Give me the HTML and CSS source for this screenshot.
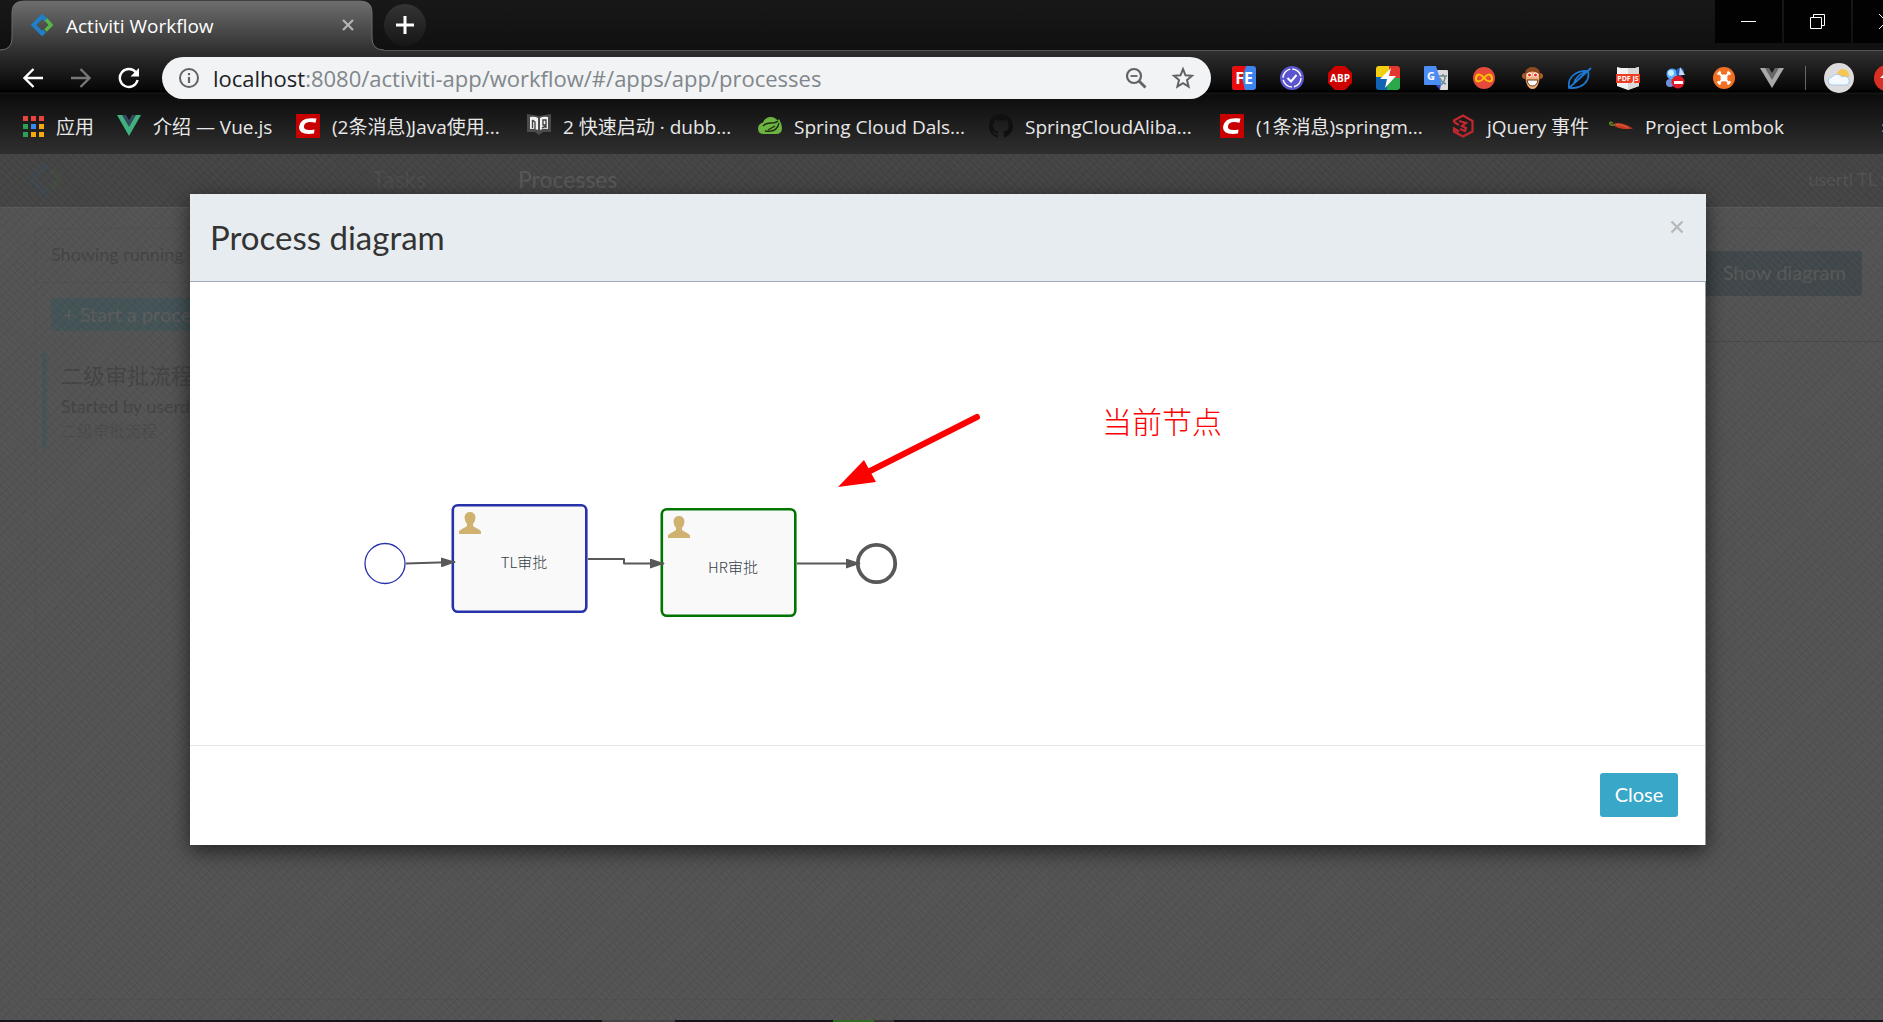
FILE: index.html
```html
<!DOCTYPE html>
<html lang="en">
<head>
<meta charset="utf-8">
<title>Activiti Workflow</title>
<link rel="stylesheet" href="styles.css">
</head>
<body>
<header class="browser">
  <div class="tabstrip">
    <div class="tab">
      <svg class="tab-shape" width="384" height="51" viewBox="0 0 384 51" aria-hidden="true">
        <defs><linearGradient id="tabfill" x1="0" y1="0" x2="0" y2="1"><stop offset="0" stop-color="#6e6e6e"/><stop offset="1" stop-color="#303030"/></linearGradient></defs>
        <path d="M0 51V50Q12 50 12 38V12Q12 1 24 1H360Q372 1 372 12V38Q372 50 384 50V51Z" fill="url(#tabfill)"/>
        <path d="M0 50Q12 50 12 38V12Q12 1 24 1H360Q372 1 372 12V38Q372 50 384 50" fill="none" stroke="#6a6a6a"/>
      </svg>
      <div class="tab-content">
        <svg width="22" height="22" viewBox="0 0 22 22" fill="none" stroke-width="4"><path d="M13.500 4.500L11 2.500 2.500 11l8.500 8.500 2.500-2.500" stroke="#1f7fc8"/><path d="M13 4l2 2" stroke="#1f7fc8"/><path d="M15 5.500L20 11l-5.500 5.500" stroke="#56b648" stroke-width="3.500"/></svg>
        <span class="tab-title">Activiti Workflow</span>
        <button class="plain" aria-label="Close tab"><svg width="12" height="12" viewBox="0 0 12 12" stroke="#b4b4b4" stroke-width="2.200"><path d="M1 1l10 10M11 1L1 11"/></svg></button>
      </div>
    </div>
    <button class="new-tab" aria-label="New tab"><svg width="18" height="18" viewBox="0 0 18 18" stroke="#fff" stroke-width="3"><path d="M9 0v18M0 9h18"/></svg></button>
    <div class="window-controls">
      <button aria-label="Minimize"><svg width="16" height="16" viewBox="0 0 16 16" stroke="#fff"><path d="M0 7.500h15"/></svg></button>
      <button aria-label="Restore"><svg width="16" height="16" viewBox="0 0 16 16" fill="none" stroke="#fff"><path d="M.5 3.500h11v11H.5zM3.500 3.500V.5h11v11h-3"/></svg></button>
      <button aria-label="Close window"><svg width="16" height="16" viewBox="0 0 16 16" stroke="#fff"><path d="M0 0l15 15M15 0L0 15"/></svg></button>
    </div>
  </div>
  <div class="bars">
    <div class="toolbar">
      <nav class="nav-buttons">
        <button class="plain" aria-label="Back"><svg width="22" height="22" viewBox="0 0 22 22" fill="none" stroke="#fff" stroke-width="2.400"><path d="M21 11H3M11.500 2L2.500 11l9 9"/></svg></button>
        <button class="plain" aria-label="Forward"><svg width="22" height="22" viewBox="0 0 22 22" fill="none" stroke="#777" stroke-width="2.400"><path d="M1 11h18M10.500 2l9 9-9 9"/></svg></button>
        <button class="plain" aria-label="Reload"><svg width="22" height="22" viewBox="0 0 22 22" fill="none" stroke="#fff" stroke-width="2.400"><path d="M18 5.500A9 9 0 1 0 19.600 13"/><path d="M21 1v8.500h-8.500z" fill="#fff" stroke="none"/></svg></button>
      </nav>
      <div class="address">
        <svg width="22" height="22" viewBox="0 0 22 22" fill="none" stroke="#5f6368" stroke-width="2"><circle cx="11" cy="11" r="9"/><path d="M11 10v6M11 6v2.200" stroke-width="2.200"/></svg>
        <a class="url" href="#processes"><b>localhost</b>:8080/activiti-app/workflow/#/apps/app/processes</a>
        <button class="plain" aria-label="Zoom"><svg width="22" height="22" viewBox="0 0 22 22" fill="none" stroke="#5f6368" stroke-width="2.200"><circle cx="9" cy="9" r="7"/><path d="M5.500 9h7" stroke-width="1.800"/><path d="M14 14l6.500 6.500" stroke-width="2.800"/></svg></button>
        <button class="plain" aria-label="Bookmark this page"><svg width="24" height="24" viewBox="0 0 24 24" fill="none" stroke="#5f6368" stroke-width="2"><path d="M12 3.200l2.500 6.100 6.500.5-5 4.300 1.600 6.500L12 17.200l-5.600 3.400L8 14.100 3 9.800l6.500-.5z"/></svg></button>
      </div>
      <div class="extensions">
        <svg viewBox="0 0 24 24"><rect width="24" height="24" rx="3" fill="#3d85ee"/><path d="M3 0h11l-4 12 3 12H3a3 3 0 0 1-3-3V3a3 3 0 0 1 3-3z" fill="#e80c0c"/><text x="12" y="18" class="t-fe">FE</text></svg>
        <svg viewBox="0 0 24 24"><circle cx="12" cy="12" r="12" fill="#5b56cd"/><circle cx="12" cy="12" r="9" fill="none" stroke="#fff" stroke-width="1.400" stroke-dasharray="12 2.140"/><path d="M7.500 12l3.500 3.500L16.500 9" fill="none" stroke="#fff" stroke-width="2"/></svg>
        <svg viewBox="0 0 24 24"><path d="M7 0h10l7 7v10l-7 7H7l-7-7V7z" fill="#cf0000"/><text x="12" y="16" class="t-abp">ABP</text></svg>
        <svg viewBox="0 0 24 24"><path d="M3 0h11v12H0V3a3 3 0 0 1 3-3z" fill="#f3cf10"/><path d="M13 0h8a3 3 0 0 1 3 3v10H13z" fill="#e3362f"/><path d="M0 11h12v13H3a3 3 0 0 1-3-3z" fill="#1164b4"/><path d="M11 12h13v9a3 3 0 0 1-3 3H11z" fill="#2ba84a"/><path d="M15 2L4 13h7l-2 9 11-12h-7z" fill="#fff"/></svg>
        <svg viewBox="0 0 24 24"><path d="M11 4h12a1 1 0 0 1 1 1v18a1 1 0 0 1-1 1h-7z" fill="#dcdcdc"/><path d="M11 18h6l-1 6z" fill="#3547c2"/><path d="M1 0h11l6 19H1a1 1 0 0 1-1-1V1a1 1 0 0 1 1-1z" fill="#4c8cf5"/><text x="7" y="14" class="t-g">G</text><path d="M15 10h8M19 8v2M17 19c3-2 4-5 4-9M16 12c1 3 3 5 6 6" fill="none" stroke="#6e8b91" stroke-width="1.500"/></svg>
        <svg viewBox="0 0 24 24"><circle cx="12" cy="12" r="11" fill="#e54a3c"/><path d="M12 12c-3-4-7-5-8 0s5 4 8 0 7-5 8 0-5 4-8 0z" fill="none" stroke="#ffc400" stroke-width="2"/></svg>
        <svg viewBox="0 0 24 24"><circle cx="5" cy="10" r="3" fill="#a55e2c"/><circle cx="20" cy="10" r="3" fill="#a55e2c"/><path d="M12.500 1C6 1 4 6 5 12s3 11 7.500 11S19 18 20 12 19 1 12.500 1z" fill="#8b4a20"/><path d="M6 8q6-5 13 0v7q-2 8-6.500 8T6 15z" fill="#efb078"/><circle cx="9.500" cy="9" r="2.400" fill="#fff"/><circle cx="15.500" cy="9" r="2.400" fill="#fff"/><circle cx="9.500" cy="9" r="1.500" fill="#e22"/><circle cx="15.500" cy="9" r="1.500" fill="#e22"/><path d="M7 14h11q-1 6-5.500 6T7 14z" fill="#fff" stroke="#6b3510"/></svg>
        <svg viewBox="0 0 24 24" fill="none" stroke="#1d78d6" stroke-width="1.700"><path d="M1 22C-1 10 10 4 20 5c2 8-3 18-19 17zM1 22L23 2M6 17C8 10 13 7 20 5"/></svg>
        <svg viewBox="0 0 24 24"><path d="M1 1l4 1h14l4-1v19l-11 4-11-4z" fill="#f2f2f2"/><path d="M12 2h7l4-1v19l-11 4z" fill="#d8d8d8"/><path d="M0 8h24v9H0z" fill="#ee3d23"/><text x="12" y="15" class="t-pdf">PDF JS</text></svg>
        <svg viewBox="0 0 24 24"><circle cx="8" cy="8" r="5.500" fill="#55b1ff"/><circle cx="7" cy="7" r="3" fill="#c8edff"/><circle cx="16" cy="6" r="4" fill="#245fbd"/><path d="M16 1l5 8h-6z" fill="#c7d9f7"/><circle cx="6" cy="17" r="4" fill="#6f8fd6"/><circle cx="14" cy="16" r="6.500" fill="#de1b26"/><path d="M10 15h9v3h-9z" fill="#fff"/></svg>
        <svg viewBox="0 0 24 24"><circle cx="12" cy="12" r="11" fill="#f36f21"/><path d="M7.500 7.500l9 9M16.500 7.500l-9 9" stroke="#fff" stroke-width="2"/><circle cx="12" cy="12" r="3.500" fill="#fff"/><path d="M5.500 8.500l3-3M15.500 5.500l3 3M5.500 15.500l3 3M15.500 18.500l3-3" stroke="#fff" stroke-width="2.200"/></svg>
        <svg viewBox="0 0 24 24"><path d="M0 2h24L12 22z" fill="#a9a9a9"/><path d="M5 2h14l-7 12z" fill="#686868"/><path d="M9 2h6l-3 5z" fill="#181818"/></svg>
      </div>
      <span class="divider"></span>
      <svg class="avatar" width="30" height="30" viewBox="0 0 30 30"><circle cx="15" cy="15" r="15" fill="#dcdcde"/><circle cx="19" cy="12" r="6" fill="#f8c64e"/><path d="M8 22a4 4 0 0 1 0-8 6 6 0 0 1 10 0 4 4 0 0 1 5 8z" fill="#f4f9ff" stroke="#a8c8ec"/></svg>
      <svg class="avatar" width="26" height="26" viewBox="0 0 26 26"><circle cx="13" cy="13" r="13" fill="#d93025"/><path d="M13 6l7 7h-4v6h-6v-6H6z" fill="#fff"/></svg>
    </div>
    <nav class="bookmarks">
      <a class="bm bm-apps" href="#apps"><svg viewBox="0 0 24 24"><path fill="#e8453c" d="M3 2h5v5H3zM11 2h5v5h-5zM19 2h5v5h-5z"/><path fill="#2ba052" d="M3 10h5v5H3zM3 18h5v5H3zM11 18h5v5h-5z"/><path fill="#3a8af5" d="M11 10h5v5h-5z"/><path fill="#f6a90f" d="M19 10h5v5h-5zM19 18h5v5h-5zM11 18h5v5h-5z"/></svg><span>应用</span></a>
      <a class="bm bm-vue" href="#vue"><svg viewBox="0 0 24 24"><path d="M0 1h24L12 22z" fill="#3fb27f"/><path d="M5 1h14l-7 12z" fill="#35495e"/><path d="M9 1h6l-3 5z" fill="#141414"/></svg><span>介绍 — Vue.js</span></a>
      <a class="bm bm-long" href="#java"><svg viewBox="0 0 24 24"><path d="M0 0h24v24H0z" fill="#c80000"/><path d="M20.500 4.500l-1 4.200Q9 6.500 8 12t10.500 3.500l-.5 4Q3 21.500 3 13.500 4 2.500 20.500 4.500z" fill="#fff"/></svg><span>(2条消息)Java使用...</span></a>
      <a class="bm bm-long" href="#dubbo"><svg viewBox="0 0 24 24"><path d="M0 0l12 2 12-2v18h-8l-4 3-4-3H0z" fill="#4b4b4b"/><path d="M3 3q5-1 8 1v12q-4-2-8-1zM21 3q-5-1-8 1v12q4-2 8-1z" fill="#f2f2f2"/><path d="M5.500 6v8M8 15V8L5.500 6M19 14V6h-3v5h3M15 14l4-2" stroke="#444" stroke-width="1.400" fill="none"/></svg><span>2 快速启动 · dubb...</span></a>
      <a class="bm bm-long" href="#spring"><svg viewBox="0 0 24 24"><path d="M6 20Q0 20 0 14.500 0 10 5 8.500 7 3 13 3q4 0 6.500 3.500L21 5q3 5 3 9 0 6-6 6z" fill="#6db33f"/><path d="M5 12q3-3 8-3 5 0 7-2M7 17q12 2 14-8M10 16l7-4" fill="none" stroke="#1b2a12" stroke-width="1.300"/></svg><span>Spring Cloud Dals...</span></a>
      <a class="bm bm-long" href="#alibaba"><svg viewBox="0 0 24 24"><path d="M12 0a12 12 0 0 0-4 23.400c.6.100.8-.3.800-.6v-2c-3.300.7-4-1.600-4-1.600-.6-1.400-1.400-1.800-1.400-1.800 1.200-1 2.300.9 2.800 1.200.8 1.100 2 .8 2.700.6l.8-1.600c-2.700-.3-5.500-1.300-5.500-6 0-1.300.5-2.400 1.200-3.200 0-.9-.4-2 .2-3.200 0 0 1 0 3.300 1.500a11 11 0 0 1 6 0c2.300-1.500 3.300-1.500 3.300-1.500.6 1.200.2 2.300.2 3.200.7.800 1.200 1.900 1.200 3.200 0 4.700-2.800 5.700-5.500 6 .6.500.9 1.200.9 2.200v3c0 .3.200.7.800.6A12 12 0 0 0 12 0z" fill="#101010"/></svg><span>SpringCloudAliba...</span></a>
      <a class="bm bm-long" href="#springm"><svg viewBox="0 0 24 24"><path d="M0 0h24v24H0z" fill="#c80000"/><path d="M20.500 4.500l-1 4.200Q9 6.500 8 12t10.500 3.500l-.5 4Q3 21.500 3 13.500 4 2.500 20.500 4.500z" fill="#fff"/></svg><span>(1条消息)springm...</span></a>
      <a class="bm bm-jquery" href="#jquery"><svg viewBox="0 0 24 24" fill="none" stroke="#c2272d" stroke-width="2.200"><path d="M3 8.500V6.500l9-5 9.500 5.500v10.500L12 22.500l-9-5v-3l5 3"/><path d="M8 7l7 2-4 3 4 2-1 3-5-2M3 8l5 3"/></svg><span>jQuery 事件</span></a>
      <a class="bm" href="#lombok"><svg viewBox="0 0 24 24"><path d="M5 9.500q4-1 8 0t11 5q-7 1-12 0T5 11z" fill="#c23a22"/><path d="M7 10.500q6 0 12 3" stroke="#e2603c" fill="none"/><path d="M1 8q-1 4 5 3M1 8l3 1" stroke="#5a7d22" stroke-width="1.800" fill="none"/></svg><span>Project Lombok</span></a>
      <span class="more">»</span>
    </nav>
  </div>
</header>

<main class="page">
  <div class="app">
    <div class="app-header">
      <svg class="app-logo" width="36" height="36" viewBox="0 0 22 22" fill="none" stroke-width="3"><path d="M13.500 4.500L11 2.500 2.500 11l8.500 8.500 2.500-2.500" stroke="#40474d"/><path d="M15 5.500L20 11l-5.500 5.500" stroke="#434b41"/></svg>
      <a class="app-link" href="#tasks">Tasks</a>
      <a class="app-link app-link-active" href="#processes">Processes</a>
      <a class="app-user" href="#user">usertl TL ▾</a>
    </div>
    <div class="app-body">
      <section class="list">
        <p class="list-summary">Showing running</p>
        <button class="start">+ Start a process</button>
        <article class="item">
          <h3>二级审批流程</h3>
          <p>Started by userda</p>
          <small>二级审批流程</small>
        </article>
      </section>
      <section class="detail">
        <div class="detail-bar"><button class="show">Show diagram</button></div>
      </section>
    </div>
  </div>
  <div class="backdrop"></div>
  <div class="modal" role="dialog" aria-labelledby="modal-title">
    <div class="modal-header">
      <h2 id="modal-title">Process diagram</h2>
      <button class="plain dismiss" aria-label="Dismiss"><svg width="14" height="14" viewBox="0 0 14 14" stroke="#b4b9bc" stroke-width="2.400"><path d="M1.500 1.500l11 11M12.500 1.500l-11 11"/></svg></button>
    </div>
    <svg class="diagram" role="img" aria-label="Process diagram">
      <defs>
        <path id="user" d="M0 22v-2.500q0-1 3-2.500t5-3V12Q5.500 9 5.500 5.500 6 0 11 0t5.500 5.500Q16.500 9 14 12v2q2 1.500 5 3t3 2.500V22z" fill="#d0b270"/>
        <marker id="head" markerUnits="userSpaceOnUse" markerWidth="15" markerHeight="10" refX="14" refY="5" orient="auto"><path d="M0 0l15 5-15 5z" fill="#585858"/></marker>
      </defs>
      <circle cx="195" cy="281.500" r="20" fill="#fff" stroke="#2632aa" stroke-width="1.300"/>
      <rect x="262.800" y="223.300" width="133.500" height="106.500" rx="5" fill="#f9f9f9" stroke="#2632aa" stroke-width="2.600"/>
      <rect x="471.800" y="227.300" width="133.500" height="106.500" rx="5" fill="#f9f9f9" stroke="#017501" stroke-width="2.600"/>
      <circle cx="686.500" cy="281.500" r="18.700" fill="#fff" stroke="#585858" stroke-width="3.800"/>
      <g fill="none" stroke="#585858" stroke-width="2" marker-end="url(#head)">
        <path d="M216 281.500L265 280"/>
        <path d="M398 277H434V281.500H474" stroke-linejoin="round"/>
        <path d="M607 281.500H670"/>
      </g>
      <use href="#user" x="269" y="230"/>
      <use href="#user" x="478" y="234"/>
      <text class="task" x="334" y="286">TL审批</text>
      <text class="task" x="543" y="291">HR审批</text>
      <path d="M787 135L680 189" stroke="#f00" stroke-width="6" stroke-linecap="round"/>
      <path d="M648 205L674 178l12 22z" fill="#f00"/>
      <text class="note" x="912" y="151">当前节点</text>
    </svg>
    <div class="modal-footer"><button class="close">Close</button></div>
  </div>
</main>
<div class="taskbar"></div>
</body>
</html>
```
FILE: styles.css
```css
* { box-sizing: border-box; }
body {
  margin: 0;
  min-height: 100vh;
  display: flex;
  flex-direction: column;
  overflow-x: hidden;
  background: #535353;
  font-family: Lato, "Noto Sans CJK SC", sans-serif;
}
button { font: inherit; border: 0; cursor: pointer; }
a { color: inherit; text-decoration: none; }
svg { display: block; flex: none; }
.plain { background: none; padding: 0; display: flex; }

/* Browser frame */
.browser {
  overflow: hidden;
  font-family: "Open Sans", "Noto Sans CJK SC", sans-serif;
  color: #e8e8e8;
}
.tabstrip {
  display: flex;
  height: 51px;
  background: linear-gradient(#181818, #101010);
  border-bottom: 1px solid #555;
}
.tab { position: relative; width: 384px; height: 51px; }
.tab-shape { position: absolute; inset: 0; }
.tab-content {
  position: relative;
  display: flex;
  align-items: center;
  gap: 13px;
  height: 50px;
  padding: 0 30px 0 31px;
}
.tab-title { flex: 1; padding-top: 2px; font-size: 19px; line-height: 24px; color: #fff; }
.new-tab {
  width: 42px;
  height: 42px;
  margin-top: 4px;
  border-radius: 50%;
  background: linear-gradient(#343434, #161616);
  display: grid;
  place-items: center;
  padding: 0;
}
.window-controls { display: flex; gap: 2px; margin: 0 -37px 0 auto; }
.window-controls button {
  width: 67px;
  height: 43px;
  background: #020202;
  display: grid;
  place-items: center;
  padding: 0;
}
.bars {
  background: linear-gradient(#303030 0, #060606 39px, #000 40px, #000 41px, #161616 42px, #0c0c0c 44px, #2f2f2f 100%);
}
.toolbar { display: flex; align-items: center; height: 54px; padding-left: 22px; margin-right: -17px; }
.nav-buttons { display: flex; gap: 26px; width: 140px; }
.address {
  flex: 1;
  display: flex;
  align-items: center;
  height: 42px;
  padding: 0 16px;
  border-radius: 21px;
  background: #f1f3f4;
  gap: 24px;
}
.url { flex: 1; margin-left: -11px; font-size: 22px; line-height: 28px; color: #80868b; white-space: nowrap; }
.url b { font-weight: 400; color: #202124; }
.extensions { display: flex; gap: 24px; margin-left: 21px; }
.extensions svg { width: 24px; height: 24px; }
.extensions text { fill: #fff; font-weight: 700; text-anchor: middle; }
.t-fe { font-size: 16px; }
.t-abp { font-size: 10px; }
.t-g { font-size: 11px; }
.t-pdf { font-size: 7px; }
.divider { width: 1px; height: 24px; background: #666; margin: 0 18px 0 21px; }
.avatar { margin-right: 20px; }
.avatar:last-child { margin-right: 0; }
.bookmarks { display: flex; align-items: center; height: 49px; padding: 0 0 7px 20px; }
.bm { display: flex; align-items: center; gap: 12px; font-size: 19px; line-height: 24px; white-space: nowrap; flex: none; }
.bm span { padding-top: 2px; }
.bm svg { width: 24px; height: 24px; }
.bm-apps { width: 97px; }
.bm-vue { width: 179px; }
.bm-long { width: 231px; }
.bm-jquery { width: 158px; }
.more { margin: 0 -8px 0 auto; font-size: 19px; line-height: 24px; }

/* Application behind the dialog */
.page { position: relative; flex: 1; display: flex; flex-direction: column; overflow: hidden; }
.app { flex: 1; display: flex; flex-direction: column; color: #444; }
.app-header {
  display: flex;
  align-items: center;
  height: 54px;
  padding: 0 0 3px 27px;
  background: #444;
  border-bottom: 1px solid #5a5a5a;
  font-size: 23px;
}
.app-link { margin-left: 309px; color: #4c4c4c; }
.app-link-active { margin-left: 92px; color: #585858; }
.app-user { margin: 0 -7px 0 auto; font-size: 18px; color: #525252; }
.app-body {
  flex: 1;
  display: grid;
  grid-template-columns: 480px 1fr;
  margin: 20px 0 20px 35px;
  border: 1px solid #4f4f4f;
  border-right: 0;
}
.list-summary { margin: 0; padding: 13px 0 0 15px; height: 54px; border-bottom: 1px solid #4f4f4f; font-size: 18px; line-height: 24px; }
.start {
  margin: 15px 0 22px 15px;
  width: 200px;
  height: 33px;
  padding: 0 12px 2px;
  border-radius: 3px;
  background: #445356;
  color: #5c5c5c;
  font-size: 20px;
  text-align: left;
}
.item { margin-left: 6px; height: 96px; padding: 8px 0 0 14px; border-left: 5px solid #445356; }
.item h3 { margin: 0; font-weight: 400; font-size: 22px; line-height: 30px; }
.item p { margin: 0; font-size: 18px; line-height: 30px; }
.item small { display: block; font-size: 16px; line-height: 20px; color: #4b4b4b; }
.detail-bar { display: flex; justify-content: flex-end; height: 113px; padding: 22px 21px 0 0; border-bottom: 1px solid #494949; }
.show { width: 170px; height: 45px; padding: 0 16px 3px; border-radius: 3px; background: #41484b; color: #585858; font-size: 20px; text-align: right; }
.backdrop {
  position: absolute;
  inset: 0;
  background:
    repeating-linear-gradient(45deg, rgba(255, 255, 255, 0.02) 0 2px, transparent 2px 5px),
    repeating-linear-gradient(-45deg, rgba(0, 0, 0, 0.04) 0 2px, transparent 2px 7px);
}

/* Dialog */
.modal {
  position: absolute;
  top: 40px;
  left: 190px;
  right: 177px;
  background: #fff;
  border-right: 1px solid #999;
  box-shadow: 0 6px 20px rgba(0, 0, 0, 0.6);
}
.modal-header {
  display: flex;
  justify-content: space-between;
  height: 88px;
  margin-right: -1px;
  padding: 24px 22px 0 20px;
  background: #e7ecf0;
  border-bottom: 1px solid #a0a9b8;
}
.modal-header h2 { margin: 0; font-weight: 400; font-size: 33px; line-height: 38px; color: #333; }
.dismiss { align-self: flex-start; padding-top: 2px; }
.diagram { width: 100%; height: 463px; }
.task { font: 300 15px "Noto Sans CJK SC", sans-serif; fill: #373e48; text-anchor: middle; }
.note { font: 300 30px "Noto Sans CJK SC", sans-serif; fill: #f00; }
.modal-footer { display: flex; justify-content: flex-end; padding: 27px 27px 28px; border-top: 1px solid #e3e3e3; }
.close { width: 78px; height: 44px; padding: 0 0 2px; border-radius: 3px; background: #39a7c7; color: #fff; font-size: 20px; }

.taskbar {
  height: 2px;
  background: linear-gradient(90deg, #14141a 602px, #444347 602px 675px, #14141a 675px 833px, #2f6b25 833px 874px, #3a3638 874px 894px, #14141a 894px);
}
```
